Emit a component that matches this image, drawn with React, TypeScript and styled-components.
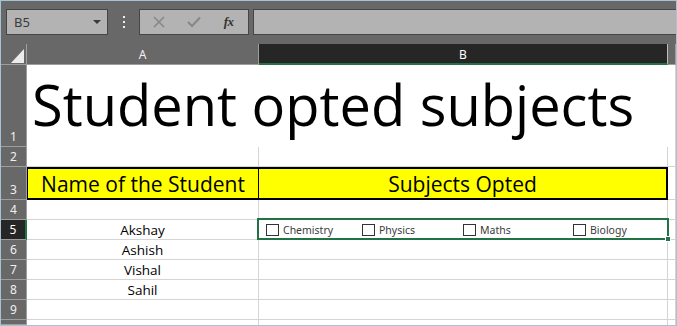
import styled, { createGlobalStyle } from 'styled-components';

const GlobalStyle = createGlobalStyle`
  html, body {
    margin: 0;
    padding: 0;
    background: #ffffff;
  }
  * {
    box-sizing: border-box;
  }
`;

const GRID = '#d4d4d4';
const HEAD_BG = '#686868';
const HEAD_LINE = '#9e9e9e';
const SELECT = '#217346';

const subjects = [
  { name: 'Chemistry', width: 96 },
  { name: 'Physics', width: 101 },
  { name: 'Maths', width: 110 },
  { name: 'Biology', width: 90 },
];

const students = ['Akshay', 'Ashish', 'Vishal', 'Sahil', ''];

const App = () => {
  return (
    <>
      <GlobalStyle />
      <Window>
        <TopBar>
          <NameBox>
            <span>B5</span>
            <DropArrow />
          </NameBox>
          <Grip>
            <i />
            <i />
            <i />
          </Grip>
          <ButtonBox>
            <ToolIcon>
              <svg width="12" height="12" viewBox="0 0 12 12">
                <path d="M1 1 L11 11 M11 1 L1 11" stroke="#878787" strokeWidth="1.6" fill="none" />
              </svg>
            </ToolIcon>
            <ToolIcon>
              <svg width="14" height="12" viewBox="0 0 14 12">
                <path d="M1 6 L5 10 L13 1.5" stroke="#878787" strokeWidth="2" fill="none" />
              </svg>
            </ToolIcon>
            <FxLabel>fx</FxLabel>
          </ButtonBox>
          <FormulaInput />
        </TopBar>

        <Sheet>
          <Corner>
            <svg width="13" height="14" viewBox="0 0 13 14">
              <path d="M13 0 L13 14 L0 14 Z" fill="#ececec" />
            </svg>
          </Corner>
          <ColHead>A</ColHead>
          <ColHead $active>B</ColHead>
          <ColHead />

          <RowHead>1</RowHead>
          <TitleCell>Student opted subjects</TitleCell>
          <Cell $noBottom $noRight />
          <Cell $noBottom />

          <RowHead>2</RowHead>
          <Cell />
          <Cell />
          <Cell />

          <RowHead>3</RowHead>
          <HeaderCell $first>Name of the Student</HeaderCell>
          <HeaderCell>Subjects Opted</HeaderCell>
          <Cell />

          <RowHead>4</RowHead>
          <Cell />
          <Cell />
          <Cell />

          {students.map((s, i) => {
            const row = i + 5;
            return [
              <RowHead key={`h${row}`} $active={row === 5}>
                {row}
              </RowHead>,
              <NameCell key={`a${row}`}>{s}</NameCell>,
              row === 5 ? (
                <CheckCell key={`b${row}`}>
                  {subjects.map((sub) => (
                    <CheckItem key={sub.name} $width={sub.width}>
                      <Box />
                      <span>{sub.name}</span>
                    </CheckItem>
                  ))}
                  <Selection>
                    <Handle />
                  </Selection>
                </CheckCell>
              ) : (
                <Cell key={`b${row}`} />
              ),
              <Cell key={`c${row}`} />,
            ];
          })}

          <RowHead />
          <Cell $noBottom />
          <Cell $noBottom />
          <Cell $noBottom />
        </Sheet>
      </Window>
    </>
  );
};

const Window = styled.div`
  width: 677px;
  height: 326px;
  border: 1px solid #a6c3d6;
  display: flex;
  flex-direction: column;
  overflow: hidden;
  background: #ffffff;
`;

const TopBar = styled.div`
  height: 43px;
  flex: none;
  background: ${HEAD_BG};
  display: flex;
  align-items: flex-start;
  padding: 8px 0 0 5px;
`;

const NameBox = styled.div`
  width: 102px;
  height: 26px;
  background: #b3b3b3;
  border: 1px solid #464646;
  display: flex;
  align-items: center;
  justify-content: space-between;
  padding: 0 6px 0 7px;
  font-family: 'Noto Sans', sans-serif;
  font-size: 13px;
  color: #3a3a3a;
`;

const DropArrow = styled.div`
  width: 0;
  height: 0;
  border-left: 4px solid transparent;
  border-right: 4px solid transparent;
  border-top: 4px solid #3a3a3a;
`;

const Grip = styled.div`
  width: 31px;
  height: 26px;
  display: flex;
  flex-direction: column;
  align-items: center;
  justify-content: center;
  gap: 3px;

  i {
    display: block;
    width: 2px;
    height: 2px;
    background: #f0f0f0;
  }
`;

const ButtonBox = styled.div`
  width: 110px;
  height: 26px;
  background: #b3b3b3;
  border: 1px solid #464646;
  display: grid;
  grid-template-columns: 1fr 1fr 1fr;
  align-items: center;
  justify-items: center;
  padding: 0 2px 0 2px;
`;

const ToolIcon = styled.div`
  display: flex;
  align-items: center;
  justify-content: center;
`;

const FxLabel = styled.span`
  font-family: 'Liberation Serif', serif;
  font-style: italic;
  font-weight: bold;
  font-size: 13px;
  color: #333333;
  letter-spacing: -0.5px;
`;

const FormulaInput = styled.div`
  flex: 1;
  height: 26px;
  margin-left: 4px;
  margin-right: -2px;
  background: #b3b3b3;
  border: 1px solid #464646;
`;

const Sheet = styled.div`
  flex: 1;
  display: grid;
  grid-template-columns: 26px 232px 409px 1fr;
  grid-template-rows: 21px 82px 20px 33px 20px repeat(5, 20px) 1fr;
  font-family: 'Open Sans', 'Noto Sans', sans-serif;
`;

const Corner = styled.div`
  background: ${HEAD_BG};
  border-right: 1px solid ${HEAD_LINE};
  border-bottom: 1px solid ${HEAD_LINE};
  display: flex;
  align-items: flex-end;
  justify-content: flex-end;
  padding: 0 2px 1px 0;
`;

const ColHead = styled.div<{ $active?: boolean }>`
  background: ${(p) => (p.$active ? '#262626' : HEAD_BG)};
  color: ${(p) => (p.$active ? '#ffffff' : '#f0f0f0')};
  border-right: 1px solid ${(p) => (p.$active ? '#bdbdbd' : HEAD_LINE)};
  border-bottom: ${(p) => (p.$active ? `2px solid ${SELECT}` : `1px solid ${HEAD_LINE}`)};
  font-family: 'Noto Sans', sans-serif;
  font-size: 12px;
  display: flex;
  align-items: center;
  justify-content: center;
  padding-top: 1px;
`;

const RowHead = styled.div<{ $active?: boolean }>`
  background: ${(p) => (p.$active ? '#262626' : HEAD_BG)};
  color: ${(p) => (p.$active ? '#ffffff' : '#f0f0f0')};
  border-right: ${(p) => (p.$active ? `2px solid ${SELECT}` : `1px solid ${HEAD_LINE}`)};
  border-bottom: 1px solid ${HEAD_LINE};
  font-family: 'Noto Sans', sans-serif;
  font-size: 12px;
  display: flex;
  align-items: flex-end;
  justify-content: center;
  padding-bottom: 1px;
  line-height: 17px;
`;

const Cell = styled.div<{ $noBottom?: boolean; $noRight?: boolean }>`
  border-right: ${(p) => (p.$noRight ? 'none' : `1px solid ${GRID}`)};
  border-bottom: ${(p) => (p.$noBottom ? 'none' : `1px solid ${GRID}`)};
  margin-right: ${(p) => (p.$noRight ? '1px' : '0')};
`;

const TitleCell = styled.div`
  position: relative;
  z-index: 1;
  white-space: nowrap;
  font-size: 56px;
  letter-spacing: 0;
  color: #000000;
  line-height: 1;
  display: flex;
  align-items: flex-end;
  padding: 0 0 15px 5px;
`;

const HeaderCell = styled.div<{ $first?: boolean }>`
  background: #ffff00;
  border-top: 2px solid #000000;
  border-bottom: 2px solid #000000;
  border-right: 2px solid #000000;
  border-left: ${(p) => (p.$first ? '1px solid #000000' : 'none')};
  margin-right: ${(p) => (p.$first ? '-1px' : '0')};
  font-size: 21px;
  color: #000000;
  display: flex;
  align-items: center;
  justify-content: center;
  line-height: 1;
  padding-top: 1px;
`;

const NameCell = styled.div`
  border-right: 1px solid ${GRID};
  border-bottom: 1px solid ${GRID};
  font-size: 13.5px;
  color: #000000;
  display: flex;
  align-items: flex-end;
  justify-content: center;
  line-height: 18px;
  padding-bottom: 0;
`;

const CheckCell = styled.div`
  position: relative;
  border-right: 1px solid ${GRID};
  border-bottom: 1px solid ${GRID};
  display: flex;
  align-items: center;
  padding-left: 7px;
`;

const CheckItem = styled.div<{ $width: number }>`
  width: ${(p) => p.$width}px;
  flex: none;
  display: flex;
  align-items: center;
  gap: 4px;
  font-family: 'Noto Sans', sans-serif;
  font-size: 10.5px;
  color: #3c3c3c;
`;

const Box = styled.div`
  width: 13px;
  height: 12px;
  border: 1px solid #333333;
  background: #ffffff;
`;

const Selection = styled.div`
  position: absolute;
  top: -2px;
  left: -2px;
  right: -2px;
  bottom: -1px;
  border: 2px solid ${SELECT};
  pointer-events: none;
`;

const Handle = styled.div`
  position: absolute;
  right: -4px;
  bottom: -4px;
  width: 6px;
  height: 6px;
  background: ${SELECT};
  border: 1px solid #ffffff;
`;

export default App;
